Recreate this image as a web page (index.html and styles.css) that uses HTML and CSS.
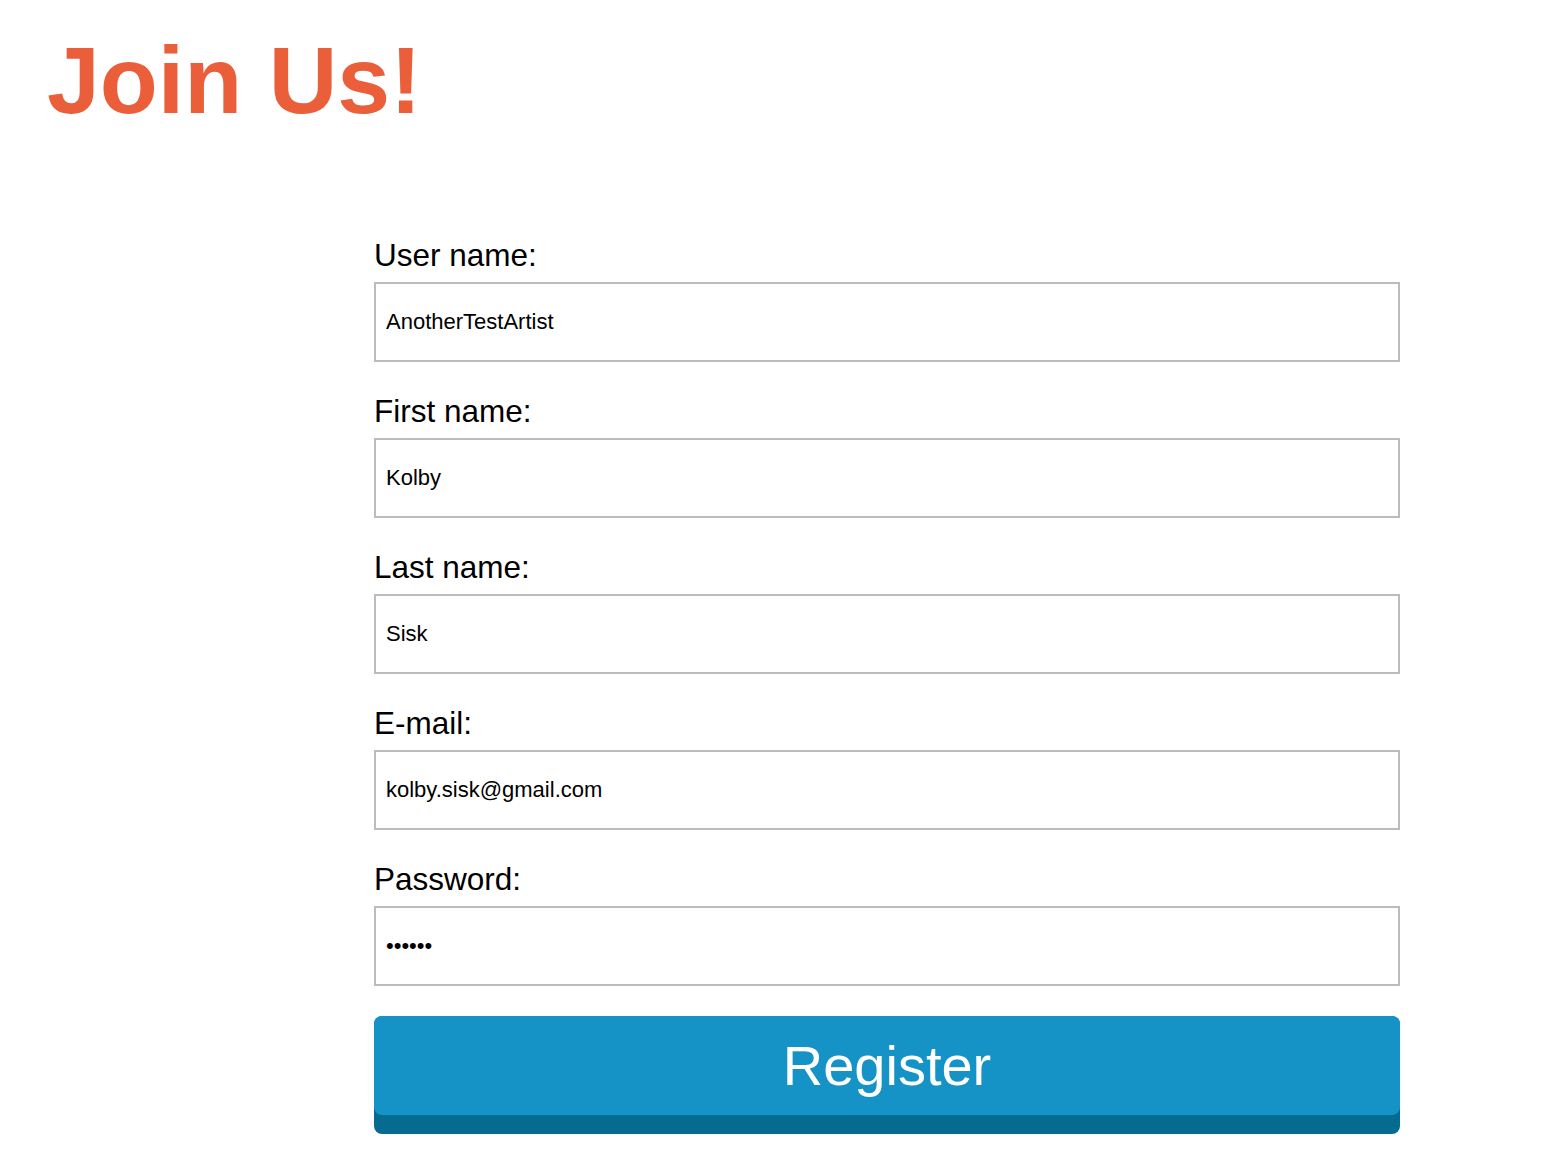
FILE: index.html
```html
<!DOCTYPE html>
<html lang="en">
<head>
<meta charset="utf-8">
<title>Join Us!</title>
<link rel="stylesheet" href="styles.css">
</head>
<body>
<h1 class="title">Join Us!</h1>
<form class="register-form" onsubmit="return false;">
  <div class="field">
    <label class="field-label" for="username">User name:</label>
    <input class="field-input" id="username" type="text" value="AnotherTestArtist">
  </div>
  <div class="field">
    <label class="field-label" for="firstname">First name:</label>
    <input class="field-input" id="firstname" type="text" value="Kolby">
  </div>
  <div class="field">
    <label class="field-label" for="lastname">Last name:</label>
    <input class="field-input" id="lastname" type="text" value="Sisk">
  </div>
  <div class="field">
    <label class="field-label" for="email">E-mail:</label>
    <input class="field-input" id="email" type="text" value="kolby.sisk@gmail.com">
  </div>
  <div class="field">
    <label class="field-label" for="password">Password:</label>
    <input class="field-input" id="password" type="password" value="secret" autofocus>
  </div>
  <button class="register-button" type="submit"><span class="register-face">Register</span></button>
</form>
<script src="script.js"></script>
</body>
</html>
```

FILE: styles.css
```css
html, body {
  margin: 0;
  padding: 0;
  background: #ffffff;
}

body {
  font-family: "Liberation Sans", Arial, Helvetica, sans-serif;
  color: #000;
  padding-bottom: 40px;
}

.title {
  margin: 33px 0 0 47px;
  font-size: 95px;
  line-height: 94px;
  font-weight: bold;
  color: #eb5e3a;
}

.register-form {
  margin: 110px 0 0 374px;
  width: 1026px;
  display: flex;
  flex-direction: column;
}

.field {
  display: flex;
  flex-direction: column;
  margin-bottom: 31px;
}

.field:last-of-type {
  margin-bottom: 30px;
}

.field-label {
  display: block;
  font-size: 31.5px;
  line-height: 36px;
  margin-bottom: 9px;
  color: #000;
}

.field-input {
  box-sizing: border-box;
  width: 100%;
  height: 80px;
  margin: 0;
  padding: 0 10px;
  border: 2px solid #bcbcbc;
  border-radius: 0;
  background: #fff;
  font-family: "Liberation Sans", Arial, Helvetica, sans-serif;
  font-size: 22px;
  color: #000;
  caret-color: #000;
}

.field-input:focus {
  outline: none;
}

.register-button {
  display: block;
  box-sizing: border-box;
  width: 100%;
  height: 118px;
  margin: 0;
  padding: 0 0 19px;
  border: none;
  border-radius: 8px;
  background: #056b90;
  cursor: pointer;
}

.register-face {
  display: flex;
  align-items: center;
  justify-content: center;
  box-sizing: border-box;
  height: 99px;
  padding-bottom: 0;
  border-radius: 8px;
  background: #1592c6;
  color: #ffffff;
  font-family: "Liberation Sans", Arial, Helvetica, sans-serif;
  font-size: 56px;
}
```

FILE: script.js
```js
var pw = document.getElementById('password');
pw.focus();
pw.setSelectionRange(pw.value.length, pw.value.length);
```
